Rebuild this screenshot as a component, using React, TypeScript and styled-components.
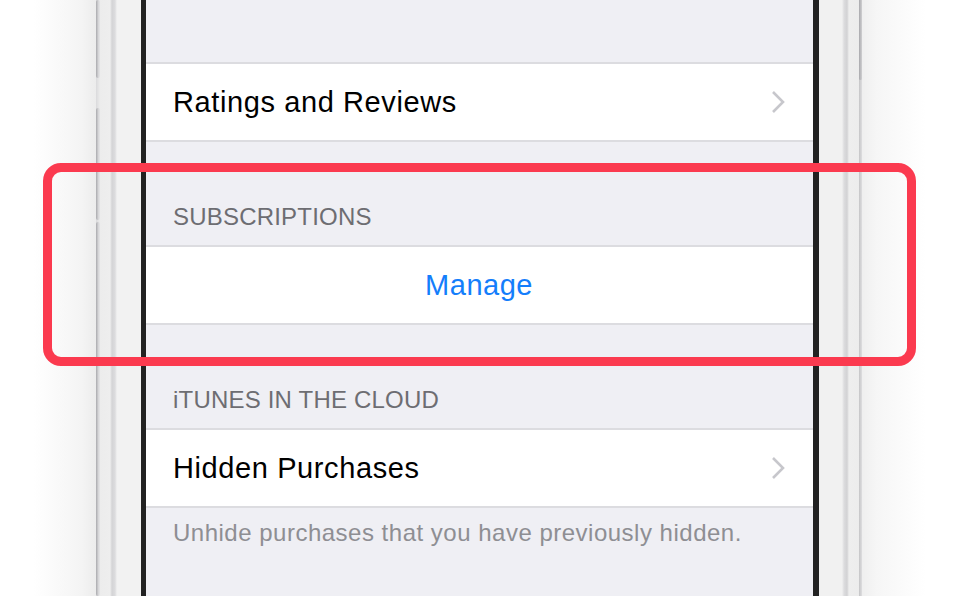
import React from "react";
import styled, { createGlobalStyle } from "styled-components";

const GlobalStyle = createGlobalStyle`
  html, body {
    margin: 0;
    padding: 0;
    background: #ffffff;
    font-family: "Liberation Sans", Arial, sans-serif;
    -webkit-font-smoothing: antialiased;
  }
`;

const Page = styled.div({
  position: "relative",
  display: "flex",
  flexDirection: "row",
  width: 960,
  height: 596,
  overflow: "hidden",
  background: "#ffffff",
});

const Margin = styled.div<{ $side: "left" | "right" }>`
  width: ${(p) => (p.$side === "left" ? 96 : 98)}px;
  height: 100%;
  background: ${(p) =>
    p.$side === "left"
      ? "linear-gradient(to right, #ffffff 0%, #ffffff 35%, #f4f4f4 85%, #ececec 100%)"
      : "linear-gradient(to left, #ffffff 0%, #ffffff 35%, #f6f6f6 85%, #efefef 100%)"};
`;

const LeftFrame = styled.div({
  display: "flex",
  flexDirection: "row",
  width: 45,
  height: "100%",
});

const RightFrame = styled.div({
  display: "flex",
  flexDirection: "row",
  width: 43,
  height: "100%",
});

const EdgeColumn = styled.div({
  display: "flex",
  flexDirection: "column",
  width: 4,
  height: "100%",
  background: "linear-gradient(to right, #dadadc, #ececec)",
});

const EdgeSegment = styled.div<{ $h?: number }>`
  width: 4px;
  ${(p) => (p.$h ? `height: ${p.$h}px;` : "flex: 1;")}
  background: linear-gradient(to right, #a9a9ad, #d6d6d8 60%, #e6e6e8);
  border-radius: 2px;
`;

const EdgeGap = styled.div<{ $h: number }>`
  height: ${(p) => p.$h}px;
`;

const FrameBody = styled.div<{ $mirror?: boolean }>`
  flex: 1;
  height: 100%;
  background: ${(p) =>
    p.$mirror
      ? "linear-gradient(to left, #ececec 0px, #eeeeee 10px, #d2d2d4 12px, #dcdcde 15px, #f1f1f1 17px, #f1f1f1 100%)"
      : "linear-gradient(to right, #ececec 0px, #eeeeee 10px, #d4d4d6 12px, #dcdcde 15px, #f2f2f2 17px, #f2f2f2 100%)"};
`;

const RightEdge = styled.div({
  display: "flex",
  flexDirection: "column",
  width: 3,
  height: "100%",
  background: "linear-gradient(to right, #c4c4c6, #dedee0)",
});

const RightButton = styled.div({
  width: 3,
  height: 80,
  background: "linear-gradient(to right, #a8a8ac, #d0d0d2)",
  borderRadius: "0 0 2px 2px",
});

const Bezel = styled.div<{ $w: number }>`
  width: ${(p) => p.$w}px;
  height: 100%;
  background: #222222;
`;

const Screen = styled.div({
  display: "flex",
  flexDirection: "column",
  width: 667,
  height: "100%",
  background: "#efeff4",
});

const TopSpace = styled.div({
  height: 62,
});

const Row = styled.div<{ $center?: boolean }>`
  box-sizing: border-box;
  display: flex;
  flex-direction: row;
  align-items: center;
  justify-content: ${(p) => (p.$center ? "center" : "space-between")};
  height: 80px;
  padding: 0 28px 0 27px;
  background: #ffffff;
  border-top: 2px solid #dcdce0;
  border-bottom: 2px solid #dcdce0;
`;

const RowLabel = styled.span({
  fontSize: 29,
  letterSpacing: 0.6,
  color: "#000000",
  lineHeight: "30px",
});

const ActionLabel = styled.span({
  fontSize: 29,
  letterSpacing: 0.5,
  color: "#147efb",
  lineHeight: "30px",
});

const SectionHeader = styled.div({
  boxSizing: "border-box",
  display: "flex",
  alignItems: "flex-end",
  height: 103,
  padding: "0 27px 16px",
  fontSize: 24,
  lineHeight: "24px",
  color: "#6d6d72",
  letterSpacing: 0.2,
});

const Footer = styled.div({
  padding: "13px 27px 0",
  fontSize: 24,
  lineHeight: "24px",
  color: "#8e8e93",
  letterSpacing: 0.5,
});

const Highlight = styled.div({
  position: "absolute",
  left: 43,
  top: 163,
  width: 873,
  height: 203,
  boxSizing: "border-box",
  border: "9px solid #fb3a4f",
  borderRadius: 18,
  pointerEvents: "none",
});

function Chevron() {
  return (
    <svg width="14" height="24" viewBox="0 0 14 24">
      <polyline
        points="2,2 12,12 2,22"
        fill="none"
        stroke="#c7c7cc"
        strokeWidth="2.6"
      />
    </svg>
  );
}

function App() {
  return (
    <>
      <GlobalStyle />
      <Page>
        <Margin $side="left" />
        <LeftFrame>
          <EdgeColumn>
            <EdgeSegment $h={78} />
            <EdgeGap $h={30} />
            <EdgeSegment $h={112} />
            <EdgeGap $h={2} />
            <EdgeSegment />
          </EdgeColumn>
          <FrameBody />
        </LeftFrame>
        <Bezel $w={5} />
        <Screen>
          <TopSpace />
          <Row>
            <RowLabel>Ratings and Reviews</RowLabel>
            <Chevron />
          </Row>
          <SectionHeader>SUBSCRIPTIONS</SectionHeader>
          <Row $center>
            <ActionLabel>Manage</ActionLabel>
          </Row>
          <SectionHeader>iTUNES IN THE CLOUD</SectionHeader>
          <Row>
            <RowLabel>Hidden Purchases</RowLabel>
            <Chevron />
          </Row>
          <Footer>Unhide purchases that you have previously hidden.</Footer>
        </Screen>
        <Bezel $w={6} />
        <RightFrame>
          <FrameBody $mirror />
          <RightEdge>
            <RightButton />
          </RightEdge>
        </RightFrame>
        <Margin $side="right" />
        <Highlight />
      </Page>
    </>
  );
}

export default App;
